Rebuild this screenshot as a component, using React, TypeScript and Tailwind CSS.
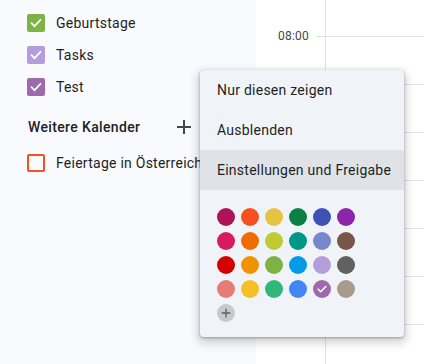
import React from "react";

type Calendar = {
  name: string;
  color: string;
  checked: boolean;
};

const myCalendars: Calendar[] = [
  { name: "Geburtstage", color: "bg-[#7cb342]", checked: true },
  { name: "Tasks", color: "bg-[#b39ddb]", checked: true },
  { name: "Test", color: "bg-[#9e69af]", checked: true },
];

const palette = [
  ["bg-[#ad1457]", "bg-[#f4511e]", "bg-[#e4c441]", "bg-[#0b8043]", "bg-[#3f51b5]", "bg-[#8e24aa]"],
  ["bg-[#d81b60]", "bg-[#ef6c00]", "bg-[#c0ca33]", "bg-[#009688]", "bg-[#7986cb]", "bg-[#795548]"],
  ["bg-[#d50000]", "bg-[#f09300]", "bg-[#7cb342]", "bg-[#039be5]", "bg-[#b39ddb]", "bg-[#616161]"],
  ["bg-[#e67c73]", "bg-[#f6bf26]", "bg-[#33b679]", "bg-[#4285f4]", "bg-[#9e69af]", "bg-[#a79b8e]"],
];

const menuItems = ["Nur diesen zeigen", "Ausblenden", "Einstellungen und Freigabe"];

function Check({ size = 14 }: { size?: number }) {
  return (
    <svg width={size} height={size} viewBox="0 0 24 24" fill="none">
      <path
        d="M4.5 12.5l5 5L19.5 7"
        stroke="white"
        strokeWidth="3"
        strokeLinecap="square"
      />
    </svg>
  );
}

function Plus({ size = 16, color = "#444746", width = 2 }: { size?: number; color?: string; width?: number }) {
  return (
    <svg width={size} height={size} viewBox="0 0 16 16" fill="none">
      <path d="M8 1v14M1 8h14" stroke={color} strokeWidth={width} />
    </svg>
  );
}

export default function App() {
  const hours = [0, 1, 2, 3, 4, 5, 6];

  return (
    <div
      className="relative flex h-[364px] w-[424px] overflow-hidden bg-white text-[#1f1f1f] tracking-[0.25px]"
      style={{ fontFamily: "Roboto, 'Noto Sans', sans-serif" }}
    >
      {/* sidebar */}
      <div className="w-[256px] shrink-0 bg-[#f8fafd] pt-[7px]">
        {myCalendars.map((cal) => (
          <div key={cal.name} className="flex h-8 items-center pl-[27px]">
            <div className={`flex h-[18px] w-[18px] items-center justify-center rounded-[2px] ${cal.color}`}>
              <Check />
            </div>
            <span className="ml-[11px] text-[14px]">{cal.name}</span>
          </div>
        ))}

        <div className="mt-1 flex h-10 items-center pl-[28px] pr-[64px]">
          <span className="flex-1 text-[14px] font-medium tracking-[0.35px]">Weitere Kalender</span>
          <Plus />
        </div>

        <div className="flex h-8 items-center pl-[27px]">
          <div className="h-[18px] w-[18px] rounded-[2px] border-2 border-[#f4511e]" />
          <span className="ml-[11px] whitespace-nowrap text-[14px]">Feiertage in Österreich</span>
        </div>
      </div>

      {/* time grid */}
      <div className="flex flex-1">
        <div className="w-[61px] shrink-0 pr-2 pt-[28px] text-right text-[12px] leading-4 tracking-[0.2px] text-[#444746]">
          08:00
        </div>
        <div className="flex flex-1 flex-col">
          <div className="ml-2 h-[36px] shrink-0 border-l border-[#dde3ea]" />
          {hours.map((h) => (
            <div key={h} className="h-[48px] shrink-0 border-t border-[#dde3ea]">
              <div className="ml-2 h-full border-l border-[#dde3ea]" />
            </div>
          ))}
        </div>
      </div>

      {/* context menu */}
      <div className="absolute left-[200px] top-[70px] w-[204px] rounded-[4px] bg-[#f0f4f9] pb-[15px] shadow-[0_1px_3px_rgba(0,0,0,0.3),0_4px_8px_3px_rgba(0,0,0,0.15)]">
        {menuItems.map((item, i) => (
          <div
            key={item}
            className={`flex h-10 items-center whitespace-nowrap pl-[17px] text-[14px] ${i === 2 ? "bg-[#dfe3e8]" : ""}`}
          >
            {item}
          </div>
        ))}
        <div className="grid grid-cols-[repeat(6,18px)] gap-[6px] pl-[17px] pt-[18px]">
          {palette.flat().map((c, i) => (
            <div key={i} className={`flex h-[18px] w-[18px] items-center justify-center rounded-full ${c}`}>
              {i === 22 && <Check size={12} />}
            </div>
          ))}
          <div className="flex h-[18px] w-[18px] items-center justify-center rounded-full bg-[#c7c9cb]">
            <Plus size={10} color="#5f6368" width={2.2} />
          </div>
        </div>
      </div>
    </div>
  );
}
